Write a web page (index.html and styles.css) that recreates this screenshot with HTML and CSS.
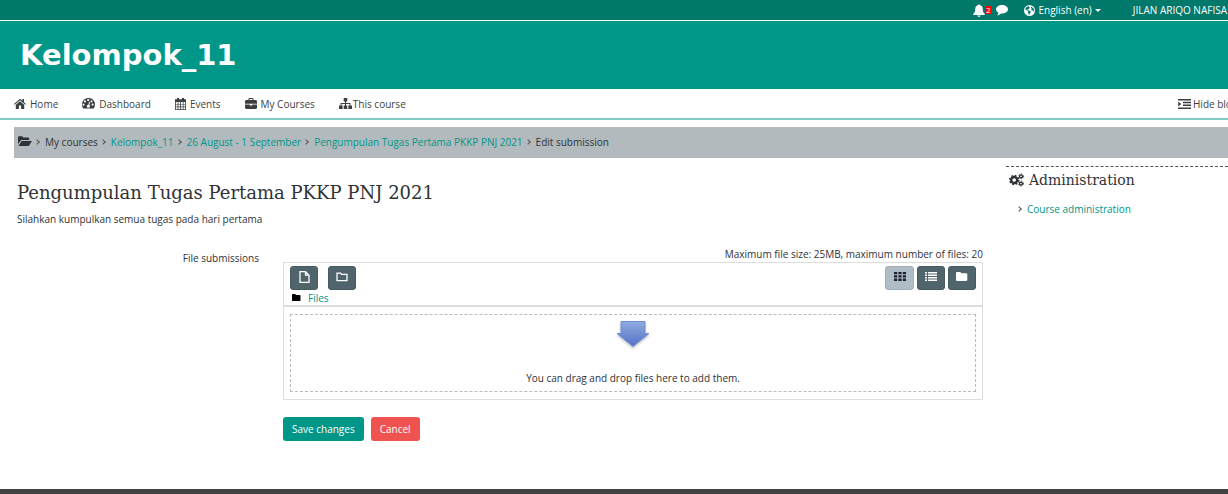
FILE: index.html
```html
<!DOCTYPE html>
<html lang="en">
<head>
<meta charset="utf-8">
<meta name="viewport" content="width=device-width, initial-scale=1">
<title>Edit submission</title>
<link rel="stylesheet" href="styles.css">
</head>
<body>
<div class="topbar">
  <button class="plain alerts" type="button" aria-label="Notifications">
    <svg class="icon" width="12" height="13" viewBox="0 0 12 13"><path d="M6 .3c.5 0 .8.3.8.8 1.700.4 2.900 1.700 2.900 3.500 0 3 .7 4.300 2.100 5.500v.9H.2v-.9c1.400-1.200 2.100-2.500 2.100-5.500 0-1.800 1.200-3.100 2.900-3.500 0-.5.3-.8.8-.8zM4.400 11.500h3.200c0 .8-.7 1.400-1.600 1.400s-1.600-.6-1.600-1.400z"/></svg><span class="count">2</span>
  </button>
  <button class="plain messages" type="button" aria-label="Messages"><svg class="icon" width="12" height="12" viewBox="0 0 12 12"><path d="M6 1c3.300 0 6 1.900 6 4.300S9.300 9.600 6 9.600l-1-.1C4 10.600 2.700 11.300 1.200 11.500c.7-.8 1.100-1.500 1.200-2.700C.9 8 0 6.700 0 5.300 0 2.900 2.700 1 6 1z"/></svg></button>
  <button class="plain language" type="button"><svg class="icon" width="11" height="11" viewBox="0 0 12 12"><path fill-rule="evenodd" d="M6 0a6 6 0 1 1 0 12A6 6 0 0 1 6 0zM2.200 2.700l-.7 2 .9.9 1.300.3.8 1-.3 1.300.7 1.200.3 1.300.8-.3.100-1.200 1.100-1.100.2-1-1.300-.8-1.600-.3-.9-1 .8-.7.8.3 1.100-1.500L5.200 2l.5-1.100zM8 1.500l-.5 1.200.9 1-.6 1.200.7.900 1.500.2.300 1.500.7-1.400-.3-2.100z"/></svg><span>English ‎(en)‎</span><i class="caret"></i></button>
  <a class="user" href="#">JILAN ARIQO NAFISA</a>
</div>
<header class="brand"><a href="#">Kelompok_11</a></header>
<nav class="mainnav">
  <a href="#" class="gap-s"><svg class="icon" width="12" height="11" viewBox="0 0 12 11"><path d="M6 .8l2.400 2V1H10v3.200l2 1.700-.7.800L6 2.200.7 6.700 0 5.900zM6 3.200l4.200 3.500V11H7.100V7.600H4.900V11H1.800V6.700z"/></svg>Home</a>
  <a href="#" class="gap-s"><svg class="icon" width="13" height="11" viewBox="0 0 13 11"><path fill-rule="evenodd" d="M6.500 0A6.400 6.400 0 0 1 13 6.500c0 1.500-.4 2.800-1.200 4H1.200A7 7 0 0 1 0 6.500 6.400 6.400 0 0 1 6.500 0zM2 5.700a1 1 0 1 0 0 1.800 1 1 0 0 0 0-1.800zM3.300 2.400a1 1 0 1 0 .1 1.900 1 1 0 0 0-.1-1.900zM6.500 1a1 1 0 1 0 0 1.900 1 1 0 0 0 0-1.900zM9.800 2.400a1 1 0 1 0 .1 1.900 1 1 0 0 0-.1-1.900zM11.100 5.700a1 1 0 1 0 0 1.800 1 1 0 0 0 0-1.800zM7.200 3.600l-.8 3.100a1.500 1.500 0 1 0 .9.300l.8-3.100z"/></svg>Dashboard</a>
  <a href="#" class="gap-s"><svg class="icon" width="11" height="12" viewBox="0 0 11 12"><path fill-rule="evenodd" d="M2 0h2v1.300h3V0h2v1.300h2V12H0V1.300h2zM.8 4v1.900h1.800V4zm2.600 0v1.900h1.800V4zM6 4v1.900h1.800V4zm2.500 0v1.900h1.700V4zM.8 6.600v1.900h1.800V6.600zm2.600 0v1.900h1.800V6.600zm2.600 0v1.900h1.800V6.600zm2.500 0v1.900h1.700V6.600zM.8 9.200v2h1.800v-2zm2.600 0v2h1.800v-2zm2.600 0v2h1.800v-2zm2.500 0v2h1.700v-2z"/></svg>Events</a>
  <a href="#" class="gap-s"><svg class="icon" width="12" height="11" viewBox="0 0 12 11"><path fill-rule="evenodd" d="M3.500 2V.7l.7-.7h3.600l.7.7V2H11l1 1v2.700H0V3l1-1zm1-1v1h3V1zM0 6.500h4.800v1h2.400v-1H12V10l-1 1H1l-1-1z"/></svg>My Courses</a>
  <a href="#"><svg class="icon" width="13" height="11" viewBox="0 0 13 11"><path d="M4.700 0h3.600v3.600H7v1.500h4.400v2.300H13V11H9.400V7.400h1.100V6H7v1.400h1.300V11H4.700V7.400H6V6H2.500v1.400h1.100V11H0V7.400h1.600V5.100H6V3.600H4.700z"/></svg>This course</a>
  <a href="#" class="hide"><svg class="icon" width="13" height="10" viewBox="0 0 13 10"><path d="M0 0h13v1.400H0zM5 2.800h8v1.400H5zM5 5.600h8V7H5zM0 8.500h13v1.400H0zM.2 2.500L3.300 5 .2 7.500z"/></svg><span>Hide blocks</span></a>
</nav>
<div class="page">
  <nav class="crumbs" aria-label="Breadcrumb">
    <svg class="icon" width="14" height="11" viewBox="0 0 14 11"><path d="M0 1l.8-.8h3.600l.8 1.300h5.200l.8.800V4H3.300L0 8zM3.700 4.900H14L10.800 10H.4z"/></svg>
    <i class="chev"></i><span>My courses</span>
    <i class="chev"></i><a href="#">Kelompok_11</a>
    <i class="chev"></i><a href="#">26 August - 1 September</a>
    <i class="chev"></i><a href="#">Pengumpulan Tugas Pertama PKKP PNJ 2021</a>
    <i class="chev"></i><span>Edit submission</span>
  </nav>
  <div class="columns">
    <main class="content">
      <h1>Pengumpulan Tugas Pertama PKKP PNJ 2021</h1>
      <p class="intro">Silahkan kumpulkan semua tugas pada hari pertama</p>
      <form class="submission">
        <div class="label" id="files-label">File submissions</div>
        <div class="field">
          <div class="limits">Maximum file size: 25MB, maximum number of files: 20</div>
          <div class="manager" role="group" aria-labelledby="files-label">
            <div class="tools">
              <div class="toolrow">
                <button class="tool" type="button" aria-label="Add file"><svg class="icon line" width="11" height="12" viewBox="0 0 11 12"><path d="M1 .7h5.500L10 4.200v7.100H1zM6.500.7v3.500H10"/></svg></button>
                <button class="tool wide" type="button" aria-label="Create folder"><svg class="icon line" width="12" height="10" viewBox="0 0 12 10"><path d="M1 1.200h3.600l1 1.200H11v6.200H1z"/></svg></button>
                <div class="views">
                  <button class="tool active" type="button" aria-label="Display as icons"><svg class="icon" width="12" height="9" viewBox="0 0 12 9"><path d="M0 0h3.200v2.300H0zm4.400 0h3.200v2.300H4.400zm4.400 0H12v2.300H8.800zM0 3.300h3.200v2.300H0zm4.400 0h3.200v2.300H4.400zm4.400 0H12v2.300H8.800zM0 6.600h3.200v2.300H0zm4.400 0h3.200v2.300H4.400zm4.400 0H12v2.300H8.800z"/></svg></button>
                  <button class="tool" type="button" aria-label="Display as list"><svg class="icon" width="12" height="9" viewBox="0 0 12 9"><path d="M0 0h2v1.500H0zm3 0h9v1.500H3zM0 2.500h2V4H0zm3 0h9V4H3zM0 5h2v1.500H0zm3 0h9v1.500H3zM0 7.500h2V9H0zm3 0h9V9H3z"/></svg></button>
                  <button class="tool" type="button" aria-label="Display as tree"><svg class="icon" width="12" height="9" viewBox="0 0 12 9"><path d="M.7 0h3.600l1 1.300h5.200l.8.700v6.300l-.8.700H.7L0 8.300V.7z"/></svg></button>
                </div>
              </div>
              <div class="path"><svg class="icon" width="9" height="7" viewBox="0 0 9 7"><path d="M.5 0h2.700l.8 1h4l.5.500v5L8 7H.5L0 6.500v-6z"/></svg><a href="#">Files</a></div>
            </div>
            <div class="dropwrap"><div class="drop">
              <svg class="arrow" width="36" height="32" viewBox="0 0 36 32"><defs><linearGradient id="blue" x1="0" y1="0" x2="0" y2="1"><stop offset="0" stop-color="#91abe0"/><stop offset="1" stop-color="#5272c5"/></linearGradient></defs><path d="M6 1.500h24v12h4L18 26.500 2 13.500h4z" fill="url(#blue)" stroke="#6f8dd0"/></svg>
              <span>You can drag and drop files here to add them.</span>
            </div></div>
          </div>
          <div class="actions"><button class="save" type="submit">Save changes</button><button class="cancel" type="button">Cancel</button></div>
        </div>
      </form>
    </main>
    <aside class="side">
      <h2><svg class="icon" width="15" height="14" viewBox="0 0 15 14"><g fill="none" stroke="currentColor"><circle cx="5.200" cy="7" r="3" stroke-width="2.400"/><circle cx="5.200" cy="7" r="4.500" stroke-width="1.500" stroke-dasharray="1.800 1.734"/><circle cx="12" cy="3.400" r="1.500" stroke-width="1.400"/><circle cx="12" cy="3.400" r="2.400" stroke-width="1" stroke-dasharray="1.200 1.313"/><circle cx="12" cy="10.600" r="1.500" stroke-width="1.400"/><circle cx="12" cy="10.600" r="2.400" stroke-width="1" stroke-dasharray="1.200 1.313"/></g></svg>Administration</h2>
      <div class="branch"><i class="chev"></i><a href="#">Course administration</a></div>
    </aside>
  </div>
</div>
<footer class="footer"></footer>
</body>
</html>
```

FILE: styles.css
```css
* { box-sizing: border-box; }
body {
  margin: 0;
  min-height: 100vh;
  display: flex;
  flex-direction: column;
  overflow-x: hidden;
  background: #fff;
  color: #2f3236;
  font: 10px/16px "Open Sans", sans-serif;
}
a { color: #009688; text-decoration: none; }
button { font: inherit; cursor: pointer; }
.icon { display: block; flex: none; fill: currentColor; }
.line { fill: none; stroke: currentColor; stroke-width: 1.3; }

.topbar {
  display: flex;
  align-items: center;
  justify-content: flex-end;
  height: 21px;
  padding-right: 1px;
  background: #00796b;
  border-bottom: 1px solid #fff;
  color: #fff;
  white-space: nowrap;
}
.plain { display: flex; align-items: center; padding: 0; border: 0; background: none; color: inherit; }
.count { padding: 0 1px; background: #f00; font-size: 8px; line-height: 8px; }
.messages { margin-left: 5px; }
.language { margin-left: 16px; gap: 3px; font-weight: 500; }
.caret { border: 3px solid transparent; border-top-color: currentColor; border-bottom: 0; }
.user { margin-left: 32px; color: #fff; font-weight: 500; }

.brand { height: 68px; padding: 10px 20px; background: #009688; }
.brand a { color: #fff; font: bold 29px/48px "DejaVu Sans", sans-serif; }

.mainnav {
  display: flex;
  align-items: center;
  gap: 24px;
  height: 31px;
  padding-left: 14px;
  border-bottom: 2px solid #80cbc4;
  white-space: nowrap;
}
.mainnav a { display: flex; align-items: center; gap: 1px; color: #3c3f42; }
.mainnav .gap-s { gap: 4px; }
.mainnav .hide { width: 50px; margin-left: auto; gap: 2px; overflow: hidden; }

.page { flex: 1; padding: 7px 0 0 14px; }
.crumbs {
  display: flex;
  align-items: center;
  height: 31px;
  padding: 0 0 2px 4px;
  background: #b2babd;
  white-space: nowrap;
}
.chev {
  width: 4px;
  height: 4px;
  flex: none;
  margin: 0 6px 0 4px;
  border: solid #555;
  border-width: 1px 1px 0 0;
  transform: rotate(45deg);
}
.crumbs .chev { margin-left: 3px; }
.columns { display: flex; gap: 23px; }
.content { flex: 1; min-width: 0; padding-left: 3px; }
h1 { margin: 21px 0 0; font: 18px/28px "DejaVu Serif", serif; white-space: nowrap; }
.intro { margin: 4px 0 20px; }
.submission { display: grid; grid-template-columns: 242px 1fr; column-gap: 24px; }
.label { padding-top: 3px; text-align: right; }
.limits { line-height: 15px; text-align: right; white-space: nowrap; }
.manager { border: 1px solid #ddd; }
.tools { padding: 3px 6px 0; border-bottom: 2px solid #ddd; }
.toolrow { display: flex; gap: 10px; }
.views { display: flex; gap: 3px; margin-left: auto; }
.tool {
  display: flex;
  align-items: center;
  justify-content: center;
  width: 28px;
  height: 24px;
  padding: 0 0 3px;
  border: 1px solid #465a61;
  border-radius: 3px;
  background: #50646b;
  color: #fff;
}
.tool.active { width: 29px; background: #b0bcc6; border-color: #a2afb9; color: #1d2033; }
.path { display: flex; align-items: center; gap: 7px; height: 15px; padding-left: 2px; color: #000; }
.dropwrap { padding: 7px 6px; }
.drop {
  display: flex;
  flex-direction: column;
  align-items: center;
  justify-content: space-between;
  height: 78px;
  padding: 5px 0;
  border: 1px dashed #bbb;
}
.arrow { filter: drop-shadow(0 2px 1px #0003); }
.actions { display: flex; gap: 7px; margin-top: 17px; }
.actions button { height: 24px; padding: 0 9px; border: 0; border-radius: 3px; color: #fff; font-weight: 500; }
.save { background: #009688; }
.cancel { background: #ef5350; }

.side { width: 222px; margin-top: 8px; border-top: 1px dashed #555; }
h2 { display: flex; align-items: center; gap: 5px; margin: 0 0 0 3px; font: 14px/26px "DejaVu Serif", serif; }
.branch { display: flex; align-items: center; padding: 8px 0 0 7px; }
.footer { height: 5px; background: #424242; }
```
